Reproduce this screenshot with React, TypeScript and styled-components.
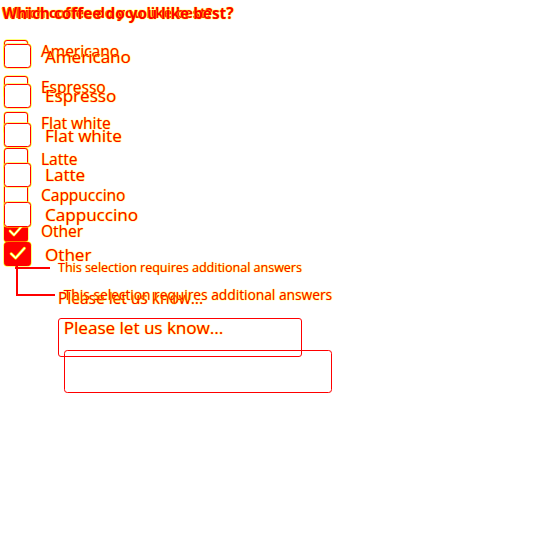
import React from "react";
import styled, { createGlobalStyle } from "styled-components";

const Global = createGlobalStyle`
  html, body { margin: 0; padding: 0; background: #ffffff; }
  body { font-family: "Open Sans", "DejaVu Sans", sans-serif; }
`;

const RED = "#ff0000";
const YEL = "#ffff00";
const glow = `text-shadow: 0 0 1px ${YEL}, 0 0 1px ${YEL};`;

const Stack = styled.div`
  display: grid;
  width: 548px;
  height: 548px;
  & > * { grid-area: 1 / 1; }
`;

const Form = styled.div<{ $zoom: number }>`
  zoom: ${(p) => p.$zoom};
  display: flex;
  flex-direction: column;
  align-items: flex-start;
  padding: 3px 0 0 2px;
  color: ${RED};
`;

const Title = styled.h2`
  margin: 0 0 10px;
  font-size: 14px;
  line-height: 20px;
  font-weight: 700;
  ${glow}
`;

const Options = styled.div`
  display: flex;
  flex-direction: column;
`;

const Row = styled.label`
  display: flex;
  align-items: center;
  gap: 13px;
  height: 36px;
  padding-left: 2px;
  font-size: 15.5px;
  ${glow}
`;

const Box = styled.span<{ $checked?: boolean }>`
  box-sizing: border-box;
  width: 24px;
  height: 22px;
  border-radius: 3px;
  border: 1.5px solid ${RED};
  box-shadow: 0 0 0 0.5px ${YEL};
  background: ${(p) => (p.$checked ? RED : "#ffffff")};
  display: flex;
  align-items: center;
  justify-content: center;
`;

const FollowUp = styled.div`
  display: flex;
  align-items: flex-end;
  gap: 8px;
  margin-top: -7px;
  padding-left: 13px;
`;

const Connector = styled.span`
  box-sizing: border-box;
  width: 35px;
  height: 27px;
  border-left: 2px solid ${RED};
  border-bottom: 2px solid ${RED};
`;

const Note = styled.span`
  font-size: 12.5px;
  line-height: 16px;
  margin-bottom: -7px;
  white-space: nowrap;
  ${glow}
`;

const Answer = styled.div`
  display: flex;
  flex-direction: column;
  gap: 10px;
  margin: 19px 0 0 56px;
`;

const AnswerLabel = styled.span`
  font-size: 15.5px;
  line-height: 20px;
  ${glow}
`;

const AnswerBox = styled.div`
  box-sizing: border-box;
  width: 244px;
  height: 39px;
  border: 1px solid ${RED};
  border-radius: 3px;
`;

const Check = () => (
  <svg width="16" height="14" viewBox="0 0 16 14">
    <polyline points="2,7 6,11 14,2" fill="none" stroke={YEL} strokeWidth="2.6" strokeLinecap="round" strokeLinejoin="round" />
    <polyline points="2,7 6,11 14,2" fill="none" stroke="#ffffff" strokeWidth="1.2" strokeLinecap="round" strokeLinejoin="round" />
  </svg>
);

const options = ["Americano", "Espresso", "Flat white", "Latte", "Cappuccino", "Other"];

const Survey = ({ zoom }: { zoom: number }) => (
  <Form $zoom={zoom}>
    <Title>Which coffee do you like best?</Title>
    <Options>
      {options.map((o) => (
        <Row key={o}>
          <Box $checked={o === "Other"}>{o === "Other" && <Check />}</Box>
          {o}
        </Row>
      ))}
    </Options>
    <FollowUp>
      <Connector />
      <Note>This selection requires additional answers</Note>
    </FollowUp>
    <Answer>
      <AnswerLabel>Please let us know...</AnswerLabel>
      <AnswerBox />
    </Answer>
  </Form>
);

export default function App() {
  return (
    <>
      <Global />
      <Stack>
        <Survey zoom={1} />
        <Survey zoom={1.1} />
      </Stack>
    </>
  );
}
